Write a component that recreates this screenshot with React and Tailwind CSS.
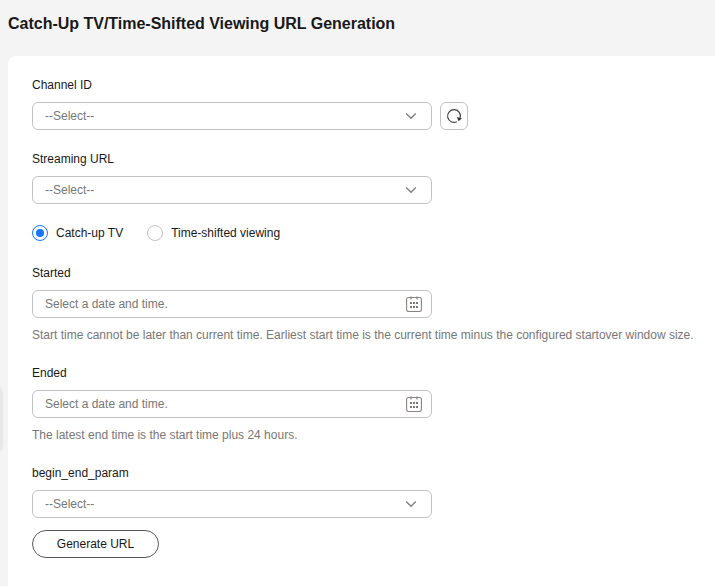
import { useState } from "react";

export default function App() {
  const [mode, setMode] = useState("catchup");

  return (
    <div className="relative flex h-screen flex-col overflow-hidden bg-[#f4f4f4] pl-2 font-['Liberation_Sans',Arial,sans-serif] text-xs leading-[18px] text-[#191919]">
      {/* collapsed side panel handle */}
      <div className="absolute -left-[6px] top-[386px] h-[66px] w-[7px] rounded-r-md bg-[#e8e8e8] shadow-[0_0_4px_rgba(0,0,0,0.14)]" />

      <h1 className="flex h-14 shrink-0 items-center pb-[9px] text-base font-bold leading-6">
        <span className="whitespace-nowrap tracking-[-0.01px]">Catch-Up TV/Time-Shifted Viewing URL Generation</span>
      </h1>

      <main className="flex-1 rounded-tl-lg bg-white pl-6 pt-5">
        <Field label="Channel ID">
          <div className="flex gap-2">
            <SelectBox />
            <button aria-label="Refresh" className="flex size-7 items-center justify-center rounded-md border border-[#c2c2c2]">
              <RefreshIcon />
            </button>
          </div>
        </Field>

        <Field label="Streaming URL">
          <SelectBox />
        </Field>

        <div className="mb-[22px] flex h-[18px] items-center gap-6">
          <Radio label="Catch-up TV" checked={mode === "catchup"} onClick={() => setMode("catchup")} />
          <Radio label="Time-shifted viewing" checked={mode === "shifted"} onClick={() => setMode("shifted")} />
        </div>

        <Field
          label="Started"
          hint="Start time cannot be later than current time. Earliest start time is the current time minus the configured startover window size."
        >
          <DateBox />
        </Field>

        <Field label="Ended" hint="The latest end time is the start time plus 24 hours.">
          <DateBox />
        </Field>

        <Field label="begin_end_param" className="mb-3">
          <SelectBox />
        </Field>

        <button className="h-7 w-[127px] rounded-full border border-[#595959] text-center">Generate URL</button>
      </main>
    </div>
  );
}

function Field({ label, hint, className = "mb-5", children }) {
  return (
    <div className={className}>
      <div className="mb-2">{label}</div>
      {children}
      {hint && <p className="mt-2 whitespace-nowrap text-[#777]">{hint}</p>}
    </div>
  );
}

function SelectBox() {
  return (
    <div className="flex h-7 w-[400px] items-center justify-between rounded-md border border-[#c2c2c2] pl-3 pr-[14px] text-[#777]">
      <span>--Select--</span>
      <svg width="12" height="8" viewBox="0 0 12 8" fill="none" stroke="#808080" strokeWidth="1.4">
        <path d="M1.2 1.6 6 6.2l4.8-4.6" />
      </svg>
    </div>
  );
}

function DateBox() {
  return (
    <div className="flex h-7 w-[400px] items-center justify-between rounded-md border border-[#c2c2c2] pl-3 pr-[9px] text-[#777]">
      <span>Select a date and time.</span>
      <CalendarIcon />
    </div>
  );
}

function Radio({ label, checked, onClick }) {
  return (
    <button role="radio" aria-checked={checked} onClick={onClick} className="flex items-center gap-2">
      <span
        className={`flex size-4 items-center justify-center rounded-full border ${checked ? "border-[#1476ff]" : "border-[#c2c2c2]"}`}
      >
        {checked && <span className="size-2 rounded-full bg-[#1476ff]" />}
      </span>
      {label}
    </button>
  );
}

function RefreshIcon() {
  return (
    <svg width="16" height="16" viewBox="0 0 16 16" fill="none">
      <path d="M10.9 13.7A6.4 6.4 0 1 1 14.1 10" stroke="#404040" strokeWidth="1.2" />
      <path d="M10.8 9.1 15.8 10.6 12.6 13.2z" fill="#333" />
    </svg>
  );
}

function CalendarIcon() {
  return (
    <svg width="16" height="16" viewBox="0 0 16 16" fill="none">
      <rect x="0.6" y="1.5" width="14.8" height="14" rx="2" stroke="#8c8380" strokeWidth="1.1" />
      <path d="M5 0.5v3M11 0.5v3" stroke="#808080" strokeWidth="1.2" />
      <path d="M4 7h2M7 7h2M10 7h2M4 11h2M7 11h2M10 11h2" stroke="#777" strokeWidth="2" />
    </svg>
  );
}
